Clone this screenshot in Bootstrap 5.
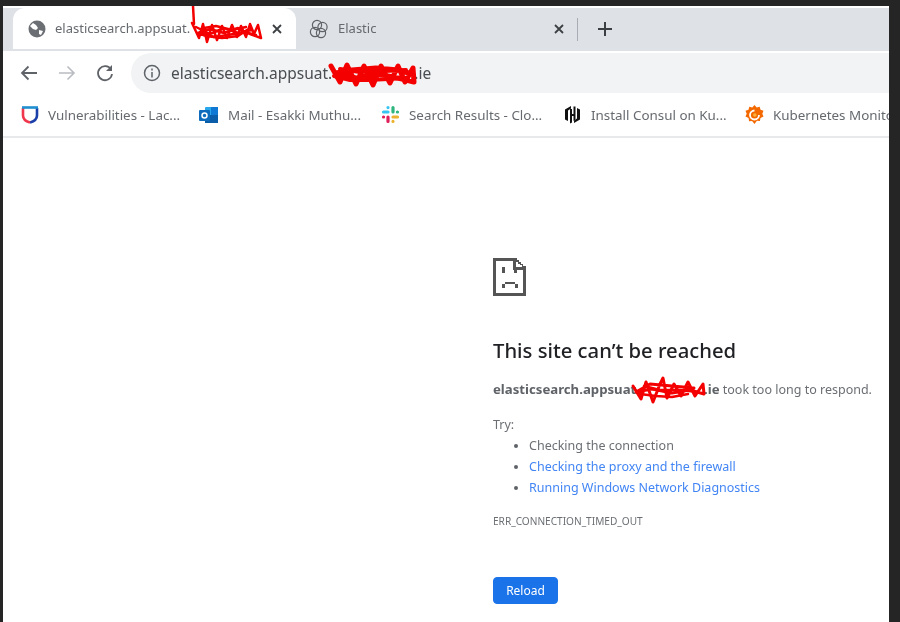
<!DOCTYPE html>
<html lang="en">
<head>
    <meta charset="UTF-8">
    <title>elasticsearch.appsuat.ie</title>
    <link href="https://cdn.jsdelivr.net/npm/bootstrap@5.3.2/dist/css/bootstrap.min.css" rel="stylesheet">
    <style>
        html, body { height: 100%; }
        body { background: #252526; overflow: hidden; font-family: "Noto Sans", "Open Sans", sans-serif; }
        .shot { width: 886px; height: 616px; margin: 6px 0 0 3px; background: #fff; overflow: hidden; position: relative; filter: blur(.5px); }
        .tab-strip { height: 43px; margin-top: 2px; background: #dee1e6; padding-left: 10px; }
        .chrome-tab { height: 41px; width: 283px; padding: 1px 13px 0 15px; color: #666a6f; font-size: 13px; white-space: nowrap; flex: none; }
        .chrome-tab.active-tab { background: #fff; border-radius: 12px 12px 0 0; }
        .chrome-tab.idle-tab { width: 281px; padding: 1px 12px 0 13px; }
        .tab-favicon { flex: none; margin-right: 9px; }
        .tab-sep { width: 1px; height: 23px; margin-top: 10px; background: #a9adb3; }
        .new-tab { margin: 13px 0 0 19px; }
        .tool-row { height: 43px; padding: 2px 0 0 16px; }
        .tool-btns { padding-top: 10px; }
        .tool-icon { width: 20px; margin-right: 18px; }
        .omnibox { height: 40px; margin-left: -2px; padding-left: 12px; background: #f1f3f4; border-radius: 20px 0 0 20px; color: #4a4e52; font-size: 15.5px; white-space: nowrap; }
        .url-text { margin-left: 10px; padding-top: 2px; }
        .url-hidden { display: inline-block; width: 82px; }
        .marks { height: 44px; padding-left: 18px; border-bottom: 2px solid #e8e9eb; font-size: 13.4px; color: #666a6f; white-space: nowrap; overflow: hidden; }
        .mark-item { width: 182px; flex: none; }
        .mark-item:first-child { width: 178px; }
        .mark-item svg { margin-right: 9px; flex: none; }
        .err-page { padding: 120px 0 0 490px; color: #6b6f74; font-size: 12.5px; }
        .err-page h1 { font-size: 20.25px; font-weight: 500; color: #202124; margin: 40px 0 0; line-height: 28px; }
        .err-host { margin: 15px 0 0; line-height: 20px; white-space: nowrap; }
        .err-host strong { font-size: 13.2px; color: #5f6368; }
        .host-hidden { display: inline-block; width: 64px; }
        .err-try { margin: 15px 0 0; line-height: 20px; }
        .err-list { margin: 0; padding-left: 36px; line-height: 21px; }
        .err-list li::marker { color: #5f6368; }
        .err-list a { color: #4285f4; text-decoration: none; }
        .err-code { margin: 13px 0 0; font-size: 10.1px; line-height: 20px; }
        .btn.btn-reload { margin-top: 46px; width: 65px; height: 27px; padding: 0; background: #1a73e8; border-color: #1a73e8; border-radius: 4px; color: #fff; font-size: 12px; }
        .scribble { position: absolute; pointer-events: none; }
    </style>
</head>
<body>
<div class="shot">
    <div class="tab-strip d-flex align-items-start">
        <div class="chrome-tab active-tab d-flex align-items-center">
            <svg width="18" height="18" viewBox="0 0 18 18" class="tab-favicon"><circle cx="9" cy="9" r="8.500" fill="#6b6f74"/><path d="M5 3l3 2 2 3-2 2-3-1-3-3zM11 10l4 1-2 4-2-1z" fill="#fff"/></svg>
            <span class="overflow-hidden">elasticsearch.appsuat.</span>
            <svg width="12" height="12" viewBox="0 0 12 12" class="flex-shrink-0 ms-auto"><path d="M2 2l8 8M10 2l-8 8" stroke="#3c4043" stroke-width="1.800"/></svg>
        </div>
        <div class="chrome-tab idle-tab d-flex align-items-center">
            <svg width="20" height="20" viewBox="0 0 20 20" class="tab-favicon" fill="none" stroke="#5f6368" stroke-width="1.200"><circle cx="8" cy="6" r="4.600"/><circle cx="13.500" cy="8" r="4.600"/><circle cx="6" cy="13" r="4.600"/><circle cx="12" cy="14" r="4.600"/></svg>
            <span>Elastic</span>
            <svg width="12" height="12" viewBox="0 0 12 12" class="flex-shrink-0 ms-auto"><path d="M2 2l8 8M10 2l-8 8" stroke="#3c4043" stroke-width="1.800"/></svg>
        </div>
        <span class="tab-sep"></span>
        <svg width="16" height="16" viewBox="0 0 16 16" class="new-tab"><path d="M8 1v14M1 8h14" stroke="#3c4043" stroke-width="2"/></svg>
    </div>

    <div class="tool-row d-flex align-items-start">
        <div class="tool-btns d-flex align-items-center">
            <svg class="tool-icon" height="20" viewBox="0 0 20 20" fill="none" stroke="#5f6368" stroke-width="1.800"><path d="M18 10H3M9.500 3.500L3 10l6.500 6.500"/></svg>
            <svg class="tool-icon" height="20" viewBox="0 0 20 20" fill="none" stroke="#b9bcc0" stroke-width="1.600"><path d="M2 10h15M10.500 3.500L17 10l-6.500 6.500"/></svg>
            <svg class="tool-icon" height="20" viewBox="0 0 20 20" fill="none" stroke="#5f6368" stroke-width="1.800"><path d="M16 6.500A7 7 0 1 0 17 11"/><path d="M17 2v6h-6" fill="#5f6368" stroke="none"/></svg>
        </div>
        <div class="omnibox flex-grow-1 d-flex align-items-center">
            <svg width="18" height="18" viewBox="0 0 18 18" fill="none" stroke="#5f6368" stroke-width="1.500" class="flex-shrink-0"><circle cx="9" cy="9" r="7.500"/><path d="M9 8v5.500M9 4.500v2"/></svg>
            <span class="url-text">elasticsearch.appsuat.<span class="url-hidden"></span>.ie</span>
        </div>
    </div>

    <div class="marks d-flex align-items-center">
        <div class="mark-item d-flex align-items-center">
            <svg width="18" height="19" viewBox="0 0 18 19" fill="none"><path d="M16 3v7.500c0 3.500-3.500 6-7 7" stroke="#1b3fa8" stroke-width="2.600"/><path d="M2 3v7.500c0 3.500 3.500 6 7 7" stroke="#f0364c" stroke-width="2.600"/><path d="M1 2.500h16" stroke="#1f8fd0" stroke-width="2.600"/></svg>
            <span>Vulnerabilities - Lac...</span>
        </div>
        <div class="mark-item d-flex align-items-center">
            <svg width="20" height="18" viewBox="0 0 20 18"><rect x="6" y="1" width="13" height="16" rx="1" fill="#28a8ea"/><rect x="12" y="1" width="7" height="8" fill="#0f78d4"/><rect x="6" y="9" width="13" height="8" fill="#0a5da8"/><rect x="0" y="4" width="11" height="11" rx="1" fill="#0f6cbd"/><circle cx="5.500" cy="9.500" r="2.500" fill="none" stroke="#fff" stroke-width="1.500"/></svg>
            <span>Mail - Esakki Muthu...</span>
        </div>
        <div class="mark-item d-flex align-items-center">
            <svg width="19" height="19" viewBox="0 0 19 19" stroke-linecap="round" stroke-width="3.200" fill="none"><path d="M2.500 7H7M7 2.500v.1" stroke="#36c5f0"/><path d="M12 2.500V7M16.500 7h-.1" stroke="#2eb67d"/><path d="M12 12h4.500M12 16.500v-.1" stroke="#ecb22e"/><path d="M7 12v4.500M2.500 12h.1" stroke="#e01e5a"/></svg>
            <span>Search Results - Clo...</span>
        </div>
        <div class="mark-item d-flex align-items-center">
            <svg width="19" height="19" viewBox="0 0 19 19" fill="#111"><path d="M8 1L2 4.500v10L5 16V5.500l3-2zM11 18l6-3.500v-10L14 3v10.500l-3 2z"/><path d="M7 4h2v5h1.500V1.500h2v13l-2 1.500v-5H9v6.500l-2 1z"/></svg>
            <span>Install Consul on Ku...</span>
        </div>
        <div class="mark-item d-flex align-items-center">
            <svg width="19" height="20" viewBox="0 0 19 20"><path d="M9.500 0l2.200 2.500 3-.8.800 3 3 1-1.200 3 1.200 2.800-3 1.500-.6 3-3-.2-2.400 3.200-2.400-3-3 .2-.6-3.200L.5 11.500l1.200-2.800L.5 5.700l3-1 .8-3 3 .8z" fill="#f46800"/><path d="M9.500 5.500a4.500 4.500 0 1 0 4.500 4.500" fill="none" stroke="#fff" stroke-width="1.800"/><circle cx="9.800" cy="10" r="1.800" fill="#fbb03b"/></svg>
            <span>Kubernetes Monitoring</span>
        </div>
    </div>

    <main class="err-page">
        <svg width="33" height="38" viewBox="493 258 33 38" class="d-block" fill="#555" shape-rendering="crispEdges">
            <path fill-rule="evenodd" d="M493 258H517V260H519V262H521V264H523V266H526V296H493ZM496 261V293H523V270H513V261ZM516 262V267H522V265H520V264H518V262Z"/>
            <path d="M502 267h3v6h-3zM514 267h3v6h-3zM505 282h10v2h-10zM502 284h3v4h-3zM515 284h3v4h-3z"/>
        </svg>
        <h1>This site can’t be reached</h1>
        <p class="err-host"><strong>elasticsearch.appsuat.<span class="host-hidden"></span>.ie</strong> took too long to respond.</p>
        <p class="err-try">Try:</p>
        <ul class="err-list">
            <li>Checking the connection</li>
            <li><a href="#">Checking the proxy and the firewall</a></li>
            <li><a href="#">Running Windows Network Diagnostics</a></li>
        </ul>
        <div class="err-code">ERR_CONNECTION_TIMED_OUT</div>
        <button class="btn btn-primary btn-reload d-block">Reload</button>
    </main>

    <!-- red marker scribbles laid over the hostnames, in screenshot coordinates -->
    <svg class="scribble top-0 start-0" width="886" height="616" viewBox="3 6 886 616" fill="none" stroke="#f40000" stroke-linejoin="round" stroke-linecap="round">
        <path stroke-width="2.500" d="M193 6L194 24M192 23L199 38L203 24L207 42L212 25L217 40L222 26L227 38L232 25L237 37L241 26L246 37L250 24L254 34L258 25L261 38L250 34L238 28L224 33L210 29L198 33L206 36L222 38L238 36L250 28"/>
        <path stroke-width="2.500" d="M196 27L210 34L224 28L238 33L252 30M200 32L214 37L228 35L244 32L256 35M204 28L216 26L232 30L246 27"/>
        <path stroke-width="5" d="M331 66L340 82L347 65L356 84L364 66L373 85L381 66L390 83L398 66L405 82L413 68L414 82L398 78L378 74L356 78L336 73L352 70L376 68L398 70L412 74"/>
        <path stroke-width="4" d="M334 76L350 80L368 80L388 79L408 78M340 69L360 72L384 71L406 70"/>
        <path stroke-width="3" d="M633 386L641 399L646 382L653 402L660 384L663 378L667 398L674 384L681 396L688 382L695 396L703 384L704 394L690 390L672 393L652 389L636 392L650 384L672 386L694 388"/>
        <path stroke-width="2.500" d="M640 394L656 396L672 397L688 394M644 386L660 390L680 390L698 392"/>
    </svg>
</div>
<script src="https://cdn.jsdelivr.net/npm/bootstrap@5.3.2/dist/js/bootstrap.bundle.min.js"></script>
</body>
</html>
